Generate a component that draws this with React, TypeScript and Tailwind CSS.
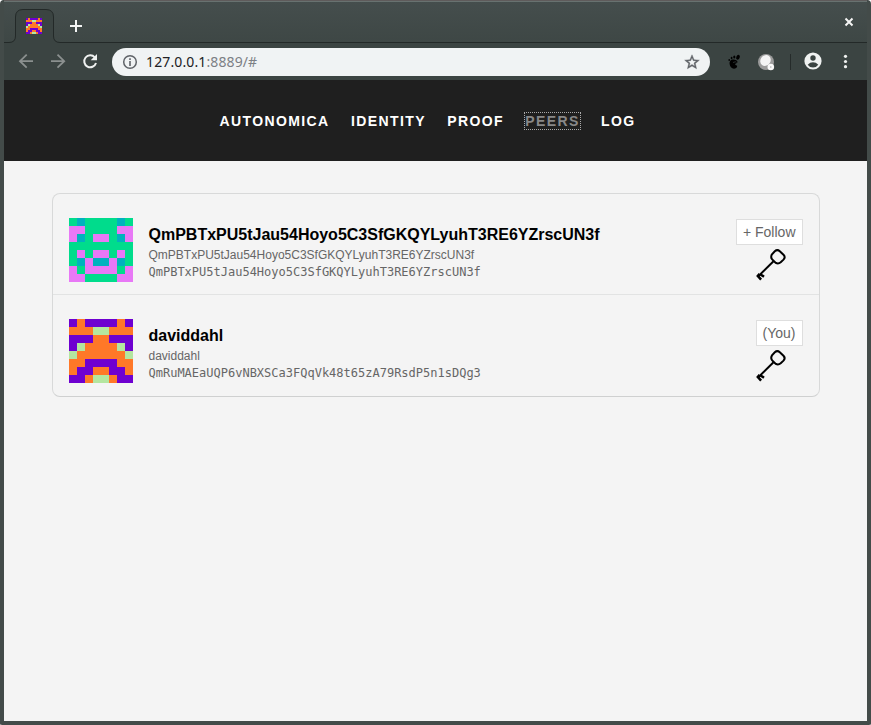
import React from 'react';

const PEER_COLORS: Record<string, string> = {
  G: '#00dc8c', P: '#e878f6', T: '#00b2be', V: '#6e00d0', O: '#ff7828', L: '#b4e6a0',
};
const PEER_A = ['GTGGGGTG', 'PPGGGGPP', 'PTGPPGTP', 'GGGGGGGG', 'GPGPPGPG', 'GTPTTPTG', 'PGPPPPGP', 'PPGGGGPP'];
const PEER_B = ['VOVVVVOV', 'OOOLLOOO', 'VVVOOVVV', 'VLOOOOLV', 'LOOOOOOL', 'OOVVVVOO', 'OVVOOVVO', 'VVOLLOVV'];

function Identicon({ rows, className }: { rows: string[]; className: string }) {
  return (
    <svg viewBox="0 0 8 8" className={className} shapeRendering="crispEdges">
      {rows.flatMap((row, y) =>
        row.split('').map((c, x) => <rect key={`${x}-${y}`} x={x} y={y} width="1" height="1" fill={PEER_COLORS[c]} />),
      )}
    </svg>
  );
}

function KeyIcon() {
  return (
    <svg width="32" height="35" viewBox="0 0 32 35" fill="none" stroke="#000" strokeWidth="2" className="mr-[31px] mt-[2px] shrink-0">
      <path d="M18.800 4.300Q21.300 2 23.800 4.200L27.500 7.800Q29.800 10.200 27.500 12.600L24.700 15.300Q22.300 17.400 19.800 15.900L16.200 12.400Q14.300 10.200 16 7.300Z" />
      <path d="M17.500 14.200L2.600 29" />
      <path d="M3.600 26.900L1.800 28.900L5.100 32.600M4.600 27.400L8 29.800" strokeWidth="2.500" />
    </svg>
  );
}

function Peer({ name, id, rows, action }: { name: string; id: string; rows: string[]; action: string }) {
  return (
    <div className="flex h-[101px] items-start pl-4 pt-6">
      <Identicon rows={rows} className="h-16 w-16 shrink-0" />
      <div className="ml-[15.5px] flex-1 whitespace-nowrap pt-[7px] text-[12px] leading-[17px] text-[#666]">
        <div className="text-[16px] font-bold leading-[20px] text-black">{name}</div>
        <div className="pt-[2px]">{name}</div>
        <div className="font-['DejaVu_Sans_Mono',monospace] text-[12px]">{id}</div>
      </div>
      <div className="flex flex-col items-end pt-px">
        <div className="mr-4 h-[26px] border border-[#dedede] bg-white pl-[5.5px] pr-[6.5px] text-[14px] leading-[24px] text-[#666]">{action}</div>
        <KeyIcon />
      </div>
    </div>
  );
}

function Toolbar() {
  return (
    <div className="flex h-[37px] shrink-0 items-start bg-[#3b4442] pl-[14px]">
      <svg width="94" height="37" viewBox="18 43 94 37" fill="none" className="shrink-0">
        <g stroke="#8b908f" strokeWidth="1.8">
          <path d="M33 61.2H20.5M26.7 54.7L20 61.2L26.7 67.7M51 61.2H63.5M57.5 54.7L64.2 61.2L57.5 67.7" />
        </g>
        <path d="M94.8 57.3A6 6 0 1 0 96 63" stroke="#f0f2f1" strokeWidth="2" />
        <path d="M97 54V60.3H90.7Z" fill="#f0f2f1" />
      </svg>
      <div className="mt-[5px] flex h-7 w-[598px] shrink-0 items-center rounded-full bg-[#f0f3f4] pl-[10px] pr-[10px]">
        <svg width="16" height="16" viewBox="0 0 16 16" className="shrink-0">
          <circle cx="8" cy="8" r="6.3" fill="none" stroke="#5f6368" strokeWidth="1.5" />
          <path d="M7.2 4.3h1.6v1.6H7.2zM7.2 7h1.6v5H7.2z" fill="#5f6368" />
        </svg>
        <div className="ml-2 flex-1 font-['Noto_Sans',sans-serif] text-[14px] leading-[20px] tracking-[0.12px] text-[#202124]">
          127.0.0.1<span className="text-[#7c8085]">:8889/#</span>
        </div>
        <svg width="16" height="16" viewBox="0 0 24 24" fill="#5f6368" stroke="#5f6368" strokeWidth="0.6">
          <path d="M23 9.2l-7.9-.7L12 1.2 8.900 8.500 1 9.200l6 5.200L5.200 22.100 12 18l6.800 4.100L17 14.400zM12 15.700l-4.100 2.500 1.100-4.700-3.600-3.100 4.700-.4L12 5.600l1.900 4.400 4.700.4-3.600 3.100 1.100 4.700z" />
        </svg>
      </div>
      <svg width="153" height="37" viewBox="710 43 153 37" className="shrink-0">
        <g fill="#000">
          <path d="M730.5 60.500C732.500 58.500 737.500 59.500 737.500 62C737.500 63.600 735.500 63 735.200 64.200C735.100 65.400 737 64.900 737.200 66C737 68.900 732.800 69.600 731 67.300C729.500 65.300 728.800 62.200 730.500 60.500Z" />
          <ellipse cx="738" cy="57.200" rx="1.700" ry="2.500" transform="rotate(24 738 57.200)" />
          <ellipse cx="734.300" cy="57" rx="1.100" ry="1.500" />
          <ellipse cx="731.600" cy="58" rx=".9" ry="1.200" />
          <ellipse cx="729.200" cy="59.900" rx=".8" ry="1" />
        </g>
        <path d="M733 62.500Q736 61.200 736.500 62.300" fill="none" stroke="#3b4442" strokeWidth=".7" />
        <circle cx="766" cy="62" r="8" fill="#9b9b9b" />
        <ellipse cx="765.500" cy="60.500" rx="5" ry="5.700" transform="rotate(38 765.500 60.500)" fill="#f4f4f4" />
        <circle cx="770.800" cy="67" r="3.300" fill="#f8f8f8" />
        <circle cx="770.800" cy="67" r=".8" fill="#aaa" />
        <path d="M790.500 54V70" stroke="#252b2a" />
        <circle cx="813" cy="61" r="8.600" fill="#f0f2f1" />
        <circle cx="813" cy="58" r="2.700" fill="#3b4442" />
        <path d="M807.700 64.700Q810 62.300 813 62.300T818.300 64.700Q816.500 67.500 813 67.500T807.700 64.700Z" fill="#3b4442" />
        <g fill="#f0f2f1">
          <circle cx="845.500" cy="56.300" r="1.600" />
          <circle cx="845.500" cy="61.500" r="1.600" />
          <circle cx="845.500" cy="66.700" r="1.600" />
        </g>
      </svg>
    </div>
  );
}

export default function App() {
  return (
    <div className="h-[725px] w-[871px] overflow-hidden bg-white font-['Liberation_Sans',Arial,sans-serif]">
      <div className="flex h-full flex-col overflow-hidden rounded-t-[4px] rounded-b-[2px] border-x-4 border-b-4 border-[#434b49] bg-[#3b4442]">
        <header className="relative flex h-[43px] shrink-0 items-start border-t border-[#5f5b5b] bg-linear-to-b from-[#454e4d] to-[#3e4745]">
          <svg width="863" height="42" viewBox="4 1 863 42" fill="none" className="absolute left-0 top-0">
            <path d="M4 1.500H867" stroke="#687270" />
            <path d="M4 42.500H9Q15.500 42.500 15.500 36V17Q15.500 9.500 23 9.500H46Q53.500 9.500 53.500 17V36Q53.500 42.500 60 42.500V43H4Z" fill="#3b4442" />
            <path d="M4 42.500H9Q15.500 42.500 15.500 36V17Q15.500 9.500 23 9.500H46Q53.500 9.500 53.500 17V36Q53.500 42.500 60 42.500H867" stroke="#232928" />
            <path d="M76 20V32M70 26H82" stroke="#f3f4f4" strokeWidth="2" />
            <path d="M845.500 18.500L852.500 25.500M852.500 18.500L845.500 25.500" stroke="#f5f5f5" strokeWidth="2" />
          </svg>
          <Identicon rows={PEER_B} className="relative ml-[22px] mt-[17px] h-4 w-4" />
        </header>
        <Toolbar />
        <nav className="flex h-[81px] shrink-0 justify-center gap-[21.3px] bg-[#1f1f1f] pr-[16px] pt-[32px] text-[14px] font-bold leading-[18px] tracking-[1.4px] text-white">
          <span>AUTONOMICA</span>
          <span>IDENTITY</span>
          <span>PROOF</span>
          <span className="mt-px h-[16px] leading-[16px] text-[#888] outline outline-1 outline-dotted outline-[#aaa]">PEERS</span>
          <span>LOG</span>
        </nav>
        <main className="flex-1 bg-[#f4f4f4] px-12 pt-8">
          <div className="h-[204px] w-[768px] divide-y divide-[#e2e3e3] rounded-lg border border-[#d8d9d9] border-b-[#cfd0d0]">
            <Peer name="QmPBTxPU5tJau54Hoyo5C3SfGKQYLyuhT3RE6YZrscUN3f" id="QmPBTxPU5tJau54Hoyo5C3SfGKQYLyuhT3RE6YZrscUN3f" rows={PEER_A} action="+ Follow" />
            <Peer name="daviddahl" id="QmRuMAEaUQP6vNBXSCa3FQqVk48t65zA79RsdP5n1sDQg3" rows={PEER_B} action="(You)" />
          </div>
        </main>
      </div>
    </div>
  );
}
